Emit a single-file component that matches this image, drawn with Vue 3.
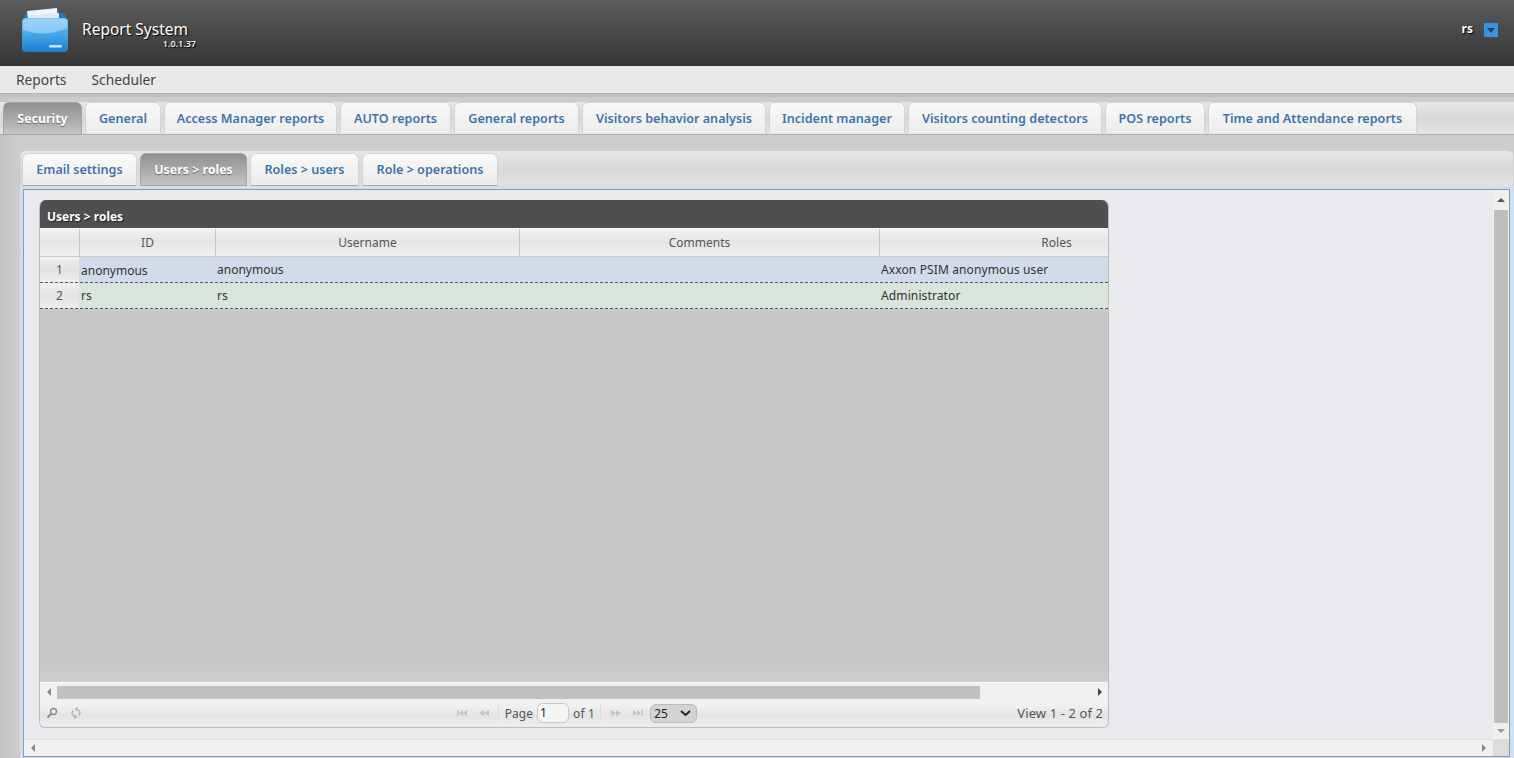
<script setup>
const mainTabs = [
  ['Security',79],['General',76],['Access Manager reports',173],['AUTO reports',111],['General reports',125],
  ['Visitors behavior analysis',184],['Incident manager',136],['Visitors counting detectors',194],['POS reports',100],['Time and Attendance reports',209]
]
const subTabs = [['Email settings',115],['Users > roles',107],['Roles > users',109],['Role > operations',136]]
const rows = [
  {n:1,id:'anonymous',user:'anonymous',roles:'Axxon PSIM anonymous user',cls:'blue'},
  {n:2,id:'rs',user:'rs',roles:'Administrator',cls:'green'}
]
</script>

<template>
  <div class="page">
    <header class="top">
      <svg class="logo" width="48" height="46" viewBox="0 0 48 46">
        <defs>
          <linearGradient id="fold" x1="0" y1="0" x2="0" y2="1"><stop offset="0" stop-color="#7cc6f2"/><stop offset=".5" stop-color="#44a4e6"/><stop offset="1" stop-color="#1c80d2"/></linearGradient>
        </defs>
        <path d="M3 13 L3 10 Q3 6 7 6 L41 6 Q45 6 45 10 L45 13Z" fill="#1a78c4"/>
        <path d="M6 4 L36 1 L37 12 L7 12Z" fill="#eef4f8"/>
        <path d="M9 8 L38 6 L38 12 L9 12Z" fill="#dbe9f2"/>
        <rect x="1" y="11" width="46" height="34" rx="4" fill="url(#fold)"/>
        <path d="M2 15 Q2 12 6 12 L42 12 Q46 12 46 15 L46 21 Q24 31 2 23Z" fill="#bfe5fa" opacity=".5"/>
        <rect x="28" y="38" width="13" height="2.5" rx="1" fill="#c5e6f8"/>
      </svg>
      <div class="brand">
        <div class="title">Report System</div>
        <div class="version">1.0.1.37</div>
      </div>
      <div class="user">
        <span class="uname">rs</span>
        <span class="drop"><i></i></span>
      </div>
    </header>

    <nav class="menu">
      <span>Reports</span>
      <span>Scheduler</span>
    </nav>
    <div class="strip"></div>

    <div class="tabs main">
      <div v-for="(t,i) in mainTabs" :key="t[0]" class="tab" :class="{active:i===0}" :style="{width:t[1]+'px'}">{{ t[0] }}</div>
    </div>

    <section class="inner">
      <div class="tabs sub">
        <div v-for="(t,i) in subTabs" :key="t[0]" class="tab" :class="{active:i===1}" :style="{width:t[1]+'px'}">{{ t[0] }}</div>
      </div>
      <div class="panel">
        <div class="scrollframe">
          <div class="viewport">
            <div class="grid">
              <div class="gtitle">Users &gt; roles</div>
              <div class="ghead">
                <div class="c0"></div><div class="c1">ID</div><div class="c2">Username</div><div class="c3">Comments</div><div class="c4">Roles</div>
              </div>
              <div v-for="r in rows" :key="r.n" class="grow" :class="r.cls">
                <div class="c0 num">{{ r.n }}</div>
                <div class="c1">{{ r.id }}</div>
                <div class="c2">{{ r.user }}</div>
                <div class="c3"></div>
                <div class="c4">{{ r.roles }}</div>
              </div>
              <div class="gbody"></div>
              <div class="hbar">
                <span class="arr left"></span>
                <div class="track"><div class="thumb"></div></div>
                <span class="arr right dark"></span>
              </div>
              <div class="pager">
                <div class="pleft">
                  <svg width="12" height="12" viewBox="0 0 12 12" fill="none" stroke="#8a8a8a" stroke-width="1.4"><circle cx="7.5" cy="4.5" r="3"/><path d="M5 7 L1.5 10.5" stroke-width="2"/></svg>
                  <svg width="12" height="12" viewBox="0 0 12 12" fill="none" stroke="#999" stroke-width="1"><path d="M3 3.5 A4 4 0 0 0 5 10"/><path d="M9 8.5 A4 4 0 0 0 7 2"/><path d="M7.5 .5 L5.5 2 L7.5 3.5"/><path d="M4.5 8.5 L6.5 10 L4.5 11.5"/></svg>
                </div>
                <div class="pcenter">
                  <svg class="pico" width="22" height="8" viewBox="0 0 22 8" fill="#c4c4c4"><rect x="6" y="1" width="1.5" height="6"/><path d="M8 4 L12 1 V7Z M12 4 L16 1 V7Z"/></svg>
                  <svg class="pico" width="22" height="8" viewBox="0 0 22 8" fill="#c4c4c4"><path d="M6 4 L11 1 V7Z M11 4 L16 1 V7Z"/></svg>
                  <span class="sep s1"></span>
                  <span class="ptext t1">Page</span>
                  <span class="pinput">1</span>
                  <span class="ptext t2">of 1</span>
                  <span class="sep s2"></span>
                  <svg class="pico" width="22" height="8" viewBox="0 0 22 8" fill="#c4c4c4"><path d="M6 1 L11 4 L6 7Z M11 1 L16 4 L11 7Z"/></svg>
                  <svg class="pico" width="22" height="8" viewBox="0 0 22 8" fill="#c4c4c4"><path d="M6 1 L10 4 L6 7Z M10 1 L14 4 L10 7Z"/><rect x="14.5" y="1" width="1.5" height="6"/></svg>
                  <span class="psel">25<svg width="11" height="7" viewBox="0 0 11 7" fill="none" stroke="#222" stroke-width="2"><path d="M1 1 L5.5 5 L10 1"/></svg></span>
                </div>
                <div class="pright">View 1 - 2 of 2</div>
              </div>
            </div>
          </div>
          <div class="vbar">
            <span class="arr up"></span>
            <div class="vthumb"></div>
            <span class="arr down"></span>
          </div>
          <div class="hbar2">
            <span class="arr left"></span>
            <span class="arr right"></span>
          </div>
          <div class="corner"></div>
        </div>
      </div>
    </section>
  </div>
</template>

<style>
html, body { margin: 0; height: 100%; overflow: hidden; background: #c9c9c9; }
</style>

<style scoped>
.page { width: 1514px; height: 758px; display: flex; flex-direction: column; overflow: hidden; font-family: "Noto Sans", "Open Sans", sans-serif; background: linear-gradient(90deg,#c4c4c4,#cdcdcd 20px); }
.top { height: 66px; flex: none; display: flex; align-items: flex-start; background: linear-gradient(#5c5c5c,#4a4a4a 45%,#363636); position: relative; }
.logo { margin: 7px 0 0 21px; flex: none; }
.brand { margin: 20px 0 0 13px; width: 114px; }
.title { color: #fff; font-size: 15.5px; line-height: 19px; white-space: nowrap; text-shadow: 1px 1px 1px #000; }
.version { color: #eee; font-size: 9px; line-height: 10px; text-align: right; font-weight: 600; text-shadow: 1px 1px 1px #000; }
.user { margin-left: auto; padding: 22px 16px 0 0; display: flex; align-items: flex-start; gap: 11px; }
.uname { color: #fff; font-size: 12px; line-height: 14px; font-weight: 700; text-shadow: 1px 1px 1px #000; }
.drop { width: 14px; height: 14px; margin-top: 1px; background: #3a92e0; display: flex; align-items: center; justify-content: center; }
.drop i { border: 4px solid transparent; border-top: 5px solid #26405e; border-bottom: 0; }
.menu { height: 27px; flex: none; background: #e9e9e9; display: flex; gap: 25px; padding-left: 16px; align-items: center; font-size: 13.8px; color: #444; }
.strip { height: 4px; flex: none; background: #c2c2c2; border-top: 1px solid #b4b4b4; box-sizing: border-box; }
.tabs { display: flex; gap: 3px; flex: none; box-sizing: border-box; }
.tabs.main { height: 33px; margin-top: 5px; padding-left: 3px; background: linear-gradient(#e8e8e8,#d8d8d8 50%,#e4e4e4); border-bottom: 1px solid #a9a9a9; }
.tab { height: 33px; flex: none; box-sizing: border-box; border: 1px solid #d4d4d4; border-bottom: 1px solid #a9a9a9; border-radius: 6px 6px 0 0; background: linear-gradient(#f9f9f9,#ececec); color: #3e74ab; font-size: 12.6px; font-weight: 600; line-height: 32px; text-align: center; white-space: nowrap; }
.tab.active { color: #fff; font-weight: 700; font-size: 12.4px; background: linear-gradient(#8f8f8f,#c4c4c4); border-color: #a3a3a3; text-shadow: 0 1px 1px #666; }
.inner { margin: 15px 0 0 20px; flex: 1; min-height: 0; display: flex; flex-direction: column; }
.tabs.sub { height: 36px; padding: 2px 0 0 1px; background: linear-gradient(#e8e8e8,#d8d8d8 50%,#e2e2e2); border-radius: 6px 6px 0 0; border: 1px solid #d0d0d0; border-bottom: 0; }
.panel { flex: 1; min-height: 0; box-sizing: border-box; background: #cfe0f3; padding: 3px 4px 1px 3px; }
.scrollframe { height: 100%; box-sizing: border-box; border: 1px solid #8f98a6; background: #e8eaee; display: grid; grid-template-columns: 1fr 16px; grid-template-rows: 1fr 17px; }
.viewport { padding: 10px 0 0 15px; min-width: 0; min-height: 0; overflow: hidden; }
.grid { width: 1068px; height: 527px; border: 1px solid #bdbdbd; border-top: 0; border-radius: 7px 7px 6px 6px; display: flex; flex-direction: column; overflow: hidden; background: #c8c8c8; }
.gtitle { height: 28px; flex: none; background: #4f4f4f; color: #fff; font-size: 12px; font-weight: 700; line-height: 33px; padding-left: 7px; text-shadow: 1px 1px 1px #222; }
.ghead, .grow { display: grid; grid-template-columns: 39px 136px 304px 360px 354px; flex: none; }
.ghead { height: 29px; background: linear-gradient(#f1f1f1,#e5e5e5 50%,#f0f0f0); border-top: 1px solid #fafafa; border-bottom: 1px solid #c9c9c9; box-sizing: border-box; color: #555; font-size: 12px; text-align: center; line-height: 27px; }
.ghead > div { border-left: 1px solid #c9c9c9; box-sizing: border-box; }
.ghead > div.c0 { border-left: 0; }
.grow { height: 26px; box-sizing: border-box; border-bottom: 1px dashed #555; color: #333; font-size: 12px; line-height: 25px; }
.grow > div { padding-left: 2px; white-space: nowrap; overflow: hidden; }
.grow .c4 { letter-spacing: .12px; }
.grow.blue .c1 { padding-top: 1px; line-height: 25px; }
.grow.blue { background: #d1dcea; }
.grow.green { background: #d9e5da; }
.grow .num { background: linear-gradient(#f0f0f0,#e2e2e2 50%,#eee); text-align: center; color: #555; padding: 0; }
.gbody { flex: 1; background: linear-gradient(#c8c8c8,#c8c8c8 95%,#cdcdcd); }
.hbar { height: 19px; flex: none; display: flex; align-items: center; background: #f0f0f0; border-top: 1px solid #fafafa; box-sizing: border-box; }
.hbar .arr { width: 17px; flex: none; }
.track { flex: 1; height: 13px; }
.thumb { width: 923px; height: 100%; background: #c1c1c1; }
.arr { display: flex; justify-content: center; align-items: center; }
.arr::after { content: ""; border: 4px solid transparent; }
.arr.left::after { border-right-color: #888; border-left: 0; }
.arr.right::after { border-left-color: #888; border-right: 0; }
.arr.dark::after { border-left-color: #444; }
.arr.up::after { border-bottom-color: #555; border-top: 0; }
.arr.down::after { border-top-color: #999; border-bottom: 0; }
.pager { height: 26px; flex: none; display: grid; grid-template-columns: 1fr auto 1fr; align-items: center; padding-bottom: 2px; box-sizing: border-box; background: linear-gradient(#f0f0f0 20%,#e4e4e4 55%,#eee); color: #555; font-size: 12px; }
.pleft { display: flex; gap: 12px; padding-left: 6px; }
.pcenter { display: flex; align-items: center; }
.pico { flex: none; display: block; }
.sep { width: 1px; height: 18px; background: #ddd; }
.s1 { margin: 0 6px 0 3px; }
.s2 { margin: 0 4px 0 5px; }
.pinput { width: 32px; height: 20px; box-sizing: border-box; border: 1px solid #c8c8c8; border-radius: 6px; background: #f5f5f5; color: #222; line-height: 18px; padding-left: 2px; margin: 0 4px; }
.ptext { white-space: nowrap; }
.t2 { letter-spacing: .2px; }
.psel { margin-left: 1px; width: 47px; height: 19px; box-sizing: border-box; border: 1px solid #bbb; border-radius: 6px; background: #d4d4d4; color: #222; display: flex; align-items: center; justify-content: space-between; padding: 0 5px 0 3px; }
.pright { text-align: right; padding-right: 5px; white-space: nowrap; font-size: 13px; letter-spacing: .1px; }
.vbar { background: #efefef; display: flex; flex-direction: column; padding: 0 1px; }
.vbar .arr { height: 20px; flex: none; }
.vbar .arr.down { height: 16px; }
.vthumb { flex: 1; background: #bebebe; }
.hbar2 { background: #f0f0f0; border-top: 1px solid #dde2e8; display: flex; justify-content: space-between; padding: 0 1px; }
.hbar2 .arr { width: 16px; }
.corner { background: #dcdcdc; }
</style>
